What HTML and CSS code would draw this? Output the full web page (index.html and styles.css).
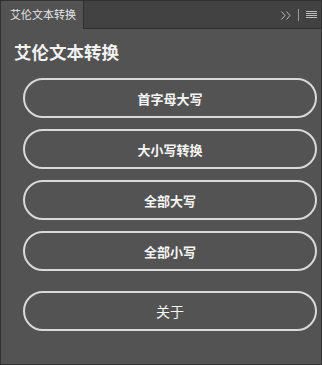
FILE: index.html
```html
<!DOCTYPE html>
<html lang="zh">
<head>
<meta charset="utf-8">
<title>艾伦文本转换</title>
<link rel="stylesheet" href="styles.css">
</head>
<body>
<div class="panel">
  <div class="tabbar">
    <div class="tab">艾伦文本转换</div>
    <div class="tab-tools">
      <svg class="chev" width="10" height="9" viewBox="0 0 10 9"><path d="M0.5 0.5 L4 4.5 L0.5 8.5 M5.5 0.5 L9 4.5 L5.5 8.5" fill="none" stroke="#bdbdbd" stroke-width="1"/></svg>
      <span class="sep"></span>
      <svg class="menu" width="11" height="8" viewBox="0 0 11 8"><path d="M0 0.5H11M0 2.5H11M0 4.5H11M0 6.5H11" stroke="#bdbdbd" stroke-width="1"/></svg>
    </div>
  </div>
  <div class="content">
    <h1 class="title">艾伦文本转换</h1>
    <div class="buttons">
      <button class="btn">首字母大写</button>
      <button class="btn">大小写转换</button>
      <button class="btn">全部大写</button>
      <button class="btn">全部小写</button>
      <button class="btn about">关于</button>
    </div>
  </div>
</div>
</body>
</html>
```
FILE: styles.css
```css
html, body {
  margin: 0;
  padding: 0;
  background: #535353;
}
body {
  font-family: "Noto Sans CJK SC", "Liberation Sans", sans-serif;
}
.panel {
  width: 322px;
  height: 365px;
  box-sizing: border-box;
  border: 1px solid #323232;
  background: #535353;
  display: flex;
  flex-direction: column;
}
.tabbar {
  height: 27px;
  background: #424242;
  border-bottom: 1px solid #2f2f2f;
  display: flex;
  align-items: stretch;
  justify-content: space-between;
  flex-shrink: 0;
}
.tab {
  width: 83px;
  background: #535353;
  border-right: 1px solid #2f2f2f;
  margin-bottom: -1px;
  color: #e6e6e6;
  font-size: 11px;
  line-height: 27px;
  padding-left: 9px;
  box-sizing: border-box;
  white-space: nowrap;
}
.tab-tools {
  display: flex;
  align-items: center;
  padding-right: 4px;
  gap: 0;
}
.chev {
  display: block;
  margin-right: 7px;
  margin-top: 1px;
}
.sep {
  width: 1px;
  height: 12px;
  background: #9a9a9a;
  margin-right: 7px;
  margin-top: 1px;
}
.menu {
  display: block;
  margin-top: 1px;
}
.content {
  padding: 0 5px 0 13px;
}
.title {
  margin: 11px 0 0 0;
  font-size: 17.5px;
  font-weight: bold;
  color: #f2f2f2;
  line-height: 24px;
}
.buttons {
  display: flex;
  flex-direction: column;
  gap: 11px;
  margin: 14px 0 0 9px;
}
.btn {
  height: 40px;
  width: 294px;
  box-sizing: border-box;
  border: 2px solid #d9d9d9;
  border-radius: 20px;
  background: transparent;
  color: #f5f5f5;
  font-family: "Noto Sans CJK SC", "Liberation Sans", sans-serif;
  font-size: 13px;
  font-weight: bold;
  padding: 0;
}
.btn.about {
  margin-top: 9px;
  font-size: 14px;
  font-weight: normal;
}
```
